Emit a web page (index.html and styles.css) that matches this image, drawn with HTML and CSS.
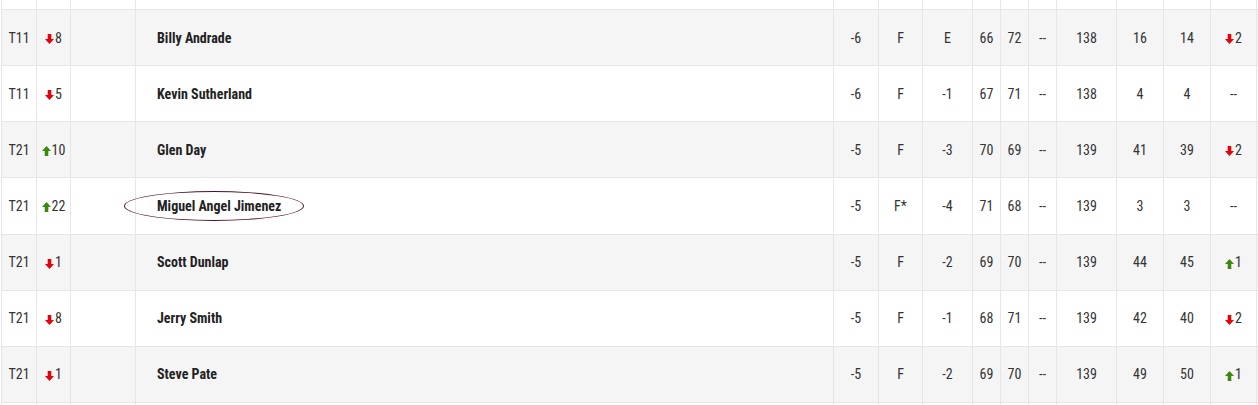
FILE: index.html
```html
<!DOCTYPE html>
<html>
<head>
<meta charset="utf-8">
<link rel="stylesheet" href="styles.css">
</head>
<body>
<div class="board">
  <div class="row partial">
    <div class="c"></div><div class="c"></div><div class="c"></div><div class="c"></div><div class="c"></div><div class="c"></div><div class="c"></div><div class="c"></div><div class="c"></div><div class="c"></div><div class="c"></div><div class="c"></div><div class="c"></div><div class="c"></div>
  </div>

  <div class="row alt">
    <div class="c">T11</div>
    <div class="c mv"><svg class="ar down" viewBox="0 0 9 10"><path d="M2.7 0h3.6v5h2.7L4.5 10 0 5h2.7z"/></svg>8</div>
    <div class="c"></div>
    <div class="c name">Billy Andrade</div>
    <div class="c">-6</div><div class="c">F</div><div class="c">E</div><div class="c">66</div><div class="c">72</div><div class="c">--</div><div class="c">138</div><div class="c">16</div><div class="c">14</div>
    <div class="c mv"><svg class="ar down" viewBox="0 0 9 10"><path d="M2.7 0h3.6v5h2.7L4.5 10 0 5h2.7z"/></svg>2</div>
  </div>

  <div class="row">
    <div class="c">T11</div>
    <div class="c mv"><svg class="ar down" viewBox="0 0 9 10"><path d="M2.7 0h3.6v5h2.7L4.5 10 0 5h2.7z"/></svg>5</div>
    <div class="c"></div>
    <div class="c name">Kevin Sutherland</div>
    <div class="c">-6</div><div class="c">F</div><div class="c">-1</div><div class="c">67</div><div class="c">71</div><div class="c">--</div><div class="c">138</div><div class="c">4</div><div class="c">4</div>
    <div class="c">--</div>
  </div>

  <div class="row alt">
    <div class="c">T21</div>
    <div class="c mv"><svg class="ar up" viewBox="0 0 9 10"><path d="M2.7 10h3.6V5h2.7L4.5 0 0 5h2.7z"/></svg>10</div>
    <div class="c"></div>
    <div class="c name">Glen Day</div>
    <div class="c">-5</div><div class="c">F</div><div class="c">-3</div><div class="c">70</div><div class="c">69</div><div class="c">--</div><div class="c">139</div><div class="c">41</div><div class="c">39</div>
    <div class="c mv"><svg class="ar down" viewBox="0 0 9 10"><path d="M2.7 0h3.6v5h2.7L4.5 10 0 5h2.7z"/></svg>2</div>
  </div>

  <div class="row">
    <div class="c">T21</div>
    <div class="c mv"><svg class="ar up" viewBox="0 0 9 10"><path d="M2.7 10h3.6V5h2.7L4.5 0 0 5h2.7z"/></svg>22</div>
    <div class="c"></div>
    <div class="c name"><span class="circled">Miguel Angel Jimenez</span></div>
    <div class="c">-5</div><div class="c">F*</div><div class="c">-4</div><div class="c">71</div><div class="c">68</div><div class="c">--</div><div class="c">139</div><div class="c">3</div><div class="c">3</div>
    <div class="c">--</div>
  </div>

  <div class="row alt">
    <div class="c">T21</div>
    <div class="c mv"><svg class="ar down" viewBox="0 0 9 10"><path d="M2.7 0h3.6v5h2.7L4.5 10 0 5h2.7z"/></svg>1</div>
    <div class="c"></div>
    <div class="c name">Scott Dunlap</div>
    <div class="c">-5</div><div class="c">F</div><div class="c">-2</div><div class="c">69</div><div class="c">70</div><div class="c">--</div><div class="c">139</div><div class="c">44</div><div class="c">45</div>
    <div class="c mv"><svg class="ar up" viewBox="0 0 9 10"><path d="M2.7 10h3.6V5h2.7L4.5 0 0 5h2.7z"/></svg>1</div>
  </div>

  <div class="row">
    <div class="c">T21</div>
    <div class="c mv"><svg class="ar down" viewBox="0 0 9 10"><path d="M2.7 0h3.6v5h2.7L4.5 10 0 5h2.7z"/></svg>8</div>
    <div class="c"></div>
    <div class="c name">Jerry Smith</div>
    <div class="c">-5</div><div class="c">F</div><div class="c">-1</div><div class="c">68</div><div class="c">71</div><div class="c">--</div><div class="c">139</div><div class="c">42</div><div class="c">40</div>
    <div class="c mv"><svg class="ar down" viewBox="0 0 9 10"><path d="M2.7 0h3.6v5h2.7L4.5 10 0 5h2.7z"/></svg>2</div>
  </div>

  <div class="row alt">
    <div class="c">T21</div>
    <div class="c mv"><svg class="ar down" viewBox="0 0 9 10"><path d="M2.7 0h3.6v5h2.7L4.5 10 0 5h2.7z"/></svg>1</div>
    <div class="c"></div>
    <div class="c name">Steve Pate</div>
    <div class="c">-5</div><div class="c">F</div><div class="c">-2</div><div class="c">69</div><div class="c">70</div><div class="c">--</div><div class="c">139</div><div class="c">49</div><div class="c">50</div>
    <div class="c mv"><svg class="ar up" viewBox="0 0 9 10"><path d="M2.7 10h3.6V5h2.7L4.5 0 0 5h2.7z"/></svg>1</div>
  </div>

  <div class="row partial bottom">
    <div class="c"></div><div class="c"></div><div class="c"></div><div class="c"></div><div class="c"></div><div class="c"></div><div class="c"></div><div class="c"></div><div class="c"></div><div class="c"></div><div class="c"></div><div class="c"></div><div class="c"></div><div class="c"></div>
  </div>
</div>
</body>
</html>
```

FILE: styles.css
```css
html, body {
  margin: 0;
  padding: 0;
  background: #fff;
}
body {
  font-family: "Roboto Condensed", "Liberation Sans Narrow", "DejaVu Sans Condensed", Roboto, sans-serif;
  font-size: 14px;
  color: #333;
  overflow: hidden;
  height: 405px;
}
.board {
  margin-left: 1px;
  width: 1257px;
}
.row {
  display: grid;
  grid-template-columns: 35px 34px 65px 698px 45px 44px 50px 28px 28px 28px 60px 47px 47px 47px;
  height: 56.14px;
  box-sizing: border-box;
  border-top: 1px solid #e6e6e6;
  background: #fff;
}
.row.alt {
  background: #f5f5f5;
}
.row.partial {
  height: 9px;
  border-top: none;
}
.row.bottom {
  border-top: 1px solid #e6e6e6;
}
.c {
  border-left: 1px solid #e6e6e6;
  display: flex;
  align-items: center;
  justify-content: center;
  white-space: nowrap;
}
.c:last-child {
  border-right: 1px solid #e6e6e6;
}
.name {
  justify-content: flex-start;
  padding-left: 21px;
  font-weight: 700;
  color: #222;
}
.ar {
  flex: none;
  width: 9px;
  height: 10px;
  margin-right: 1px;
  margin-top: 3px;
}
.ar.down { fill: #e8000b; }
.ar.up { fill: #3b8a0c; }
.circled {
  position: relative;
}
.circled::before {
  content: "";
  position: absolute;
  left: -33px;
  right: -23px;
  top: -7px;
  bottom: -7px;
  border: 1.5px solid #4f0c28;
  border-radius: 50%;
}
```
